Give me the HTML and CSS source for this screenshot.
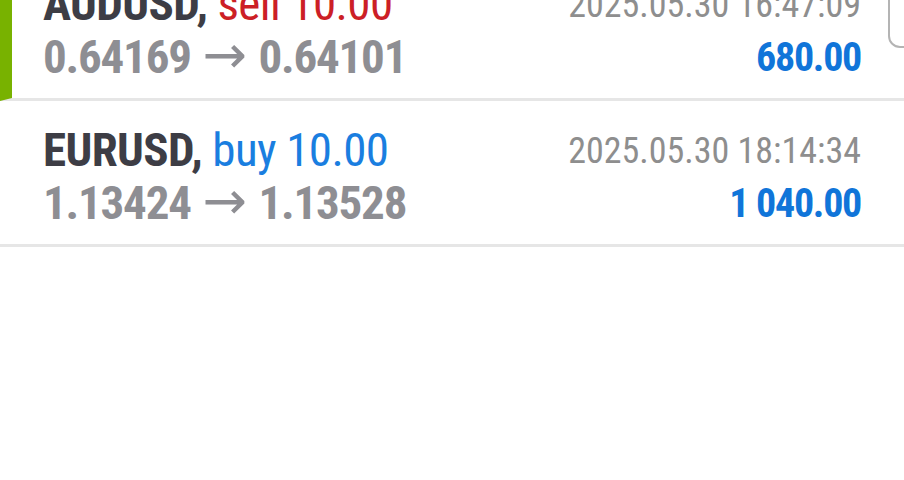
FILE: index.html
```html
<!DOCTYPE html>
<html>
<head>
<meta charset="utf-8">
<link rel="stylesheet" href="styles.css">
</head>
<body>
<div class="list">
  <div class="row row--active">
    <div class="col">
      <div class="title"><span class="sym">AUDUSD,</span> <span class="sell">sell 10.00</span></div>
      <div class="prices">0.64169 <span class="arrow">→</span> 0.64101</div>
    </div>
    <div class="col col--right">
      <div class="time">2025.05.30 16:47:09</div>
      <div class="profit">680.00</div>
    </div>
  </div>
  <div class="row">
    <div class="col">
      <div class="title"><span class="sym">EURUSD,</span> <span class="buy">buy 10.00</span></div>
      <div class="prices">1.13424 <span class="arrow">→</span> 1.13528</div>
    </div>
    <div class="col col--right">
      <div class="time">2025.05.30 18:14:34</div>
      <div class="profit">1 040.00</div>
    </div>
  </div>
</div>
<div class="scroll-btn"></div>
</body>
</html>
```

FILE: styles.css
```css
html, body {
  margin: 0;
  padding: 0;
  background: #ffffff;
  width: 904px;
  height: 480px;
  overflow: hidden;
}
body {
  font-family: "Roboto Condensed", "Liberation Sans Narrow", Roboto, sans-serif;
  font-stretch: condensed;
  position: relative;
}
.list {
  margin-top: -45px;
}
.row {
  display: flex;
  justify-content: space-between;
  padding: 23px 43px 18px 43px;
  border-bottom: 3px solid #e6e6e6;
  height: 102px;
}
.row--active {
  border-left: 12px solid #78b200;
  padding-left: 31px;
}
.col {
  display: flex;
  flex-direction: column;
  line-height: 51px;
  white-space: nowrap;
}
.col--right {
  align-items: flex-end;
}
.title {
  font-size: 47px;
  letter-spacing: -0.6px;
}
.sym {
  font-weight: 700;
  color: #3d3d45;
}
.sell {
  color: #cc1f26;
}
.buy {
  color: #1a7ee0;
}
.prices {
  font-size: 47px;
  font-weight: 700;
  color: #8e8e93;
  letter-spacing: -1.2px;
}
.arrow {
  font-family: "DejaVu Sans", sans-serif;
  font-stretch: normal;
  font-weight: 400;
  font-size: 53px;
  letter-spacing: 0;
  color: #8e8e93;
  margin: 0 2px;
}
.time {
  font-size: 36px;
  color: #8e8e8e;
  padding-top: 2px;
}
.profit {
  font-size: 40px;
  font-weight: 700;
  color: #1075d9;
  letter-spacing: -1.3px;
  padding-top: 1px;
}
.scroll-btn {
  position: absolute;
  left: 888px;
  top: -20px;
  width: 40px;
  height: 64px;
  border: 2px solid #b4b4b4;
  border-radius: 12px;
  background: #fff;
}
```
